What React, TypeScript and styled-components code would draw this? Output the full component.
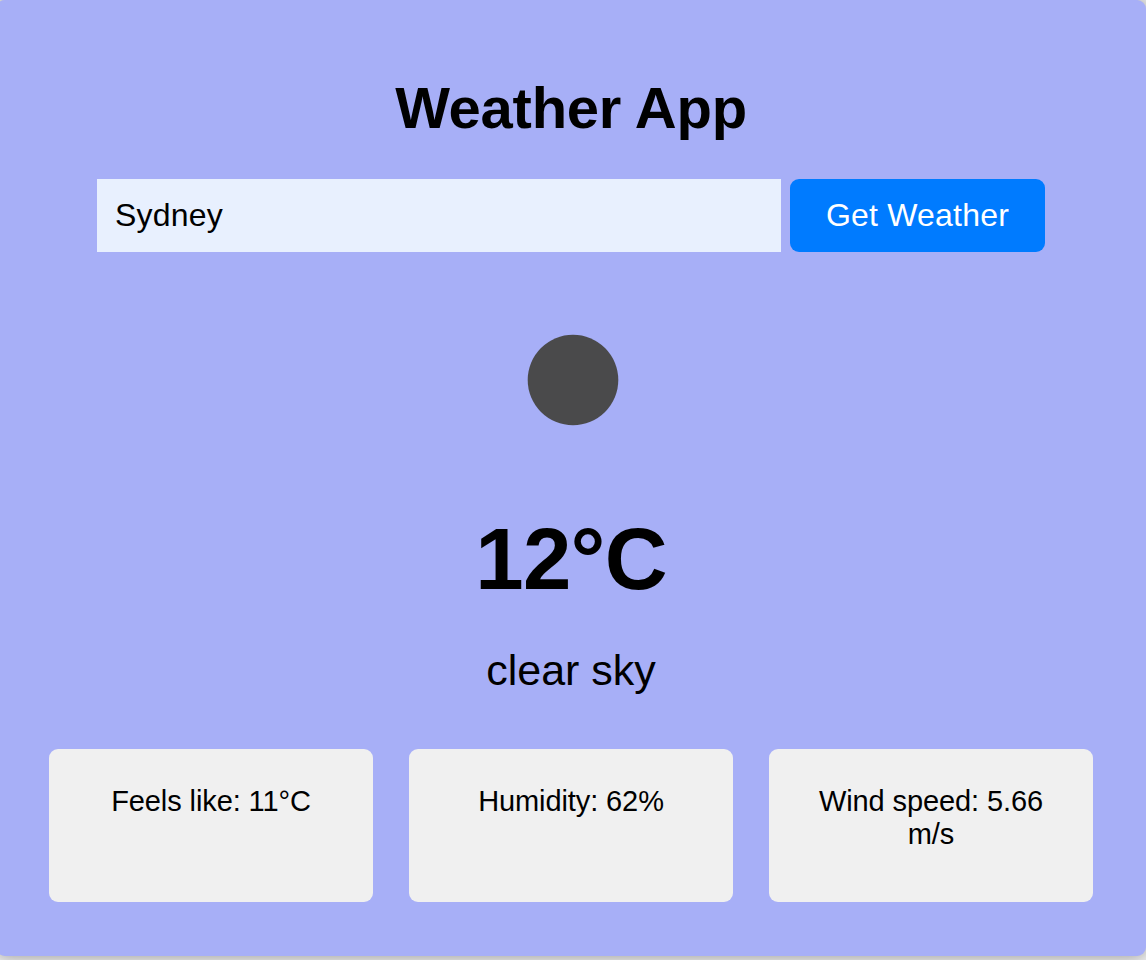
import React from "react";
import styled, { createGlobalStyle } from "styled-components";

const GlobalStyle = createGlobalStyle`
  * { box-sizing: border-box; }
  html, body { margin: 0; padding: 0; overflow: hidden; }
  body { height: 960px; background: #f0f0f0; font-family: "Liberation Sans", Arial, sans-serif; color: #000; }
`;

const Card = styled.main`
  height: 956px;
  margin-left: -4px;
  padding: 75px 53px 0;
  background: #a7aff7;
  border-radius: 9px;
  box-shadow: 0 0 18px rgba(0, 0, 0, 0.4);
  display: flex;
  flex-direction: column;
  align-items: center;
`;

const Title = styled.h1`
  margin: 0;
  font-size: 58px;
  line-height: 65px;
  letter-spacing: -0.25px;
`;

const SearchForm = styled.form`
  display: flex;
  gap: 9px;
  margin-top: 39px;
`;

const CityInput = styled.input`
  width: 684px;
  height: 73px;
  padding: 0 18px;
  border: 0;
  outline: 0;
  background: #e8f0fe;
  color: #000;
  font: 32px/36px "Liberation Sans", sans-serif;
  letter-spacing: 0.2px;
`;

const SearchButton = styled.button`
  width: 255px;
  height: 73px;
  padding: 0 0 2px;
  border: 0;
  border-radius: 9px;
  background: #007bff;
  color: #fff;
  font: 32px/36px "Liberation Sans", sans-serif;
  letter-spacing: 0.2px;
`;

const WeatherIcon = styled.svg`
  display: block;
  width: 92px;
  height: 92px;
  margin: 82px 0 0 3px;
  filter: blur(0.6px);
`;

const Temperature = styled.h2`
  margin: 83px 0 0;
  font-size: 87px;
  line-height: 100px;
  letter-spacing: -0.7px;
`;

const Description = styled.p`
  margin: 36px 0 0;
  font-size: 43px;
  line-height: 50px;
`;

const Details = styled.section`
  display: flex;
  gap: 36px;
  margin-top: 54px;
`;

const Detail = styled.div`
  width: 324px;
  height: 153px;
  padding: 36px 36px 0;
  border-radius: 9px;
  background: #f0f0f0;
  text-align: center;
  font-size: 29px;
  line-height: 33px;
  letter-spacing: -0.1px;
`;

const details = ["Feels like: 11°C", "Humidity: 62%", "Wind speed: 5.66 m/s"];

export default function App() {
  return (
    <>
      <GlobalStyle />
      <Card>
        <Title>Weather App</Title>
        <SearchForm onSubmit={(event) => event.preventDefault()}>
          <CityInput defaultValue="Sydney" aria-label="City" />
          <SearchButton type="submit">Get Weather</SearchButton>
        </SearchForm>
        <WeatherIcon viewBox="0 0 92 92" overflow="visible" aria-hidden="true">
          <circle cx="46" cy="46" r="45.3" fill="#4a4a4b" />
        </WeatherIcon>
        <Temperature>12°C</Temperature>
        <Description>clear sky</Description>
        <Details>
          {details.map((text) => (
            <Detail key={text}>{text}</Detail>
          ))}
        </Details>
      </Card>
    </>
  );
}
